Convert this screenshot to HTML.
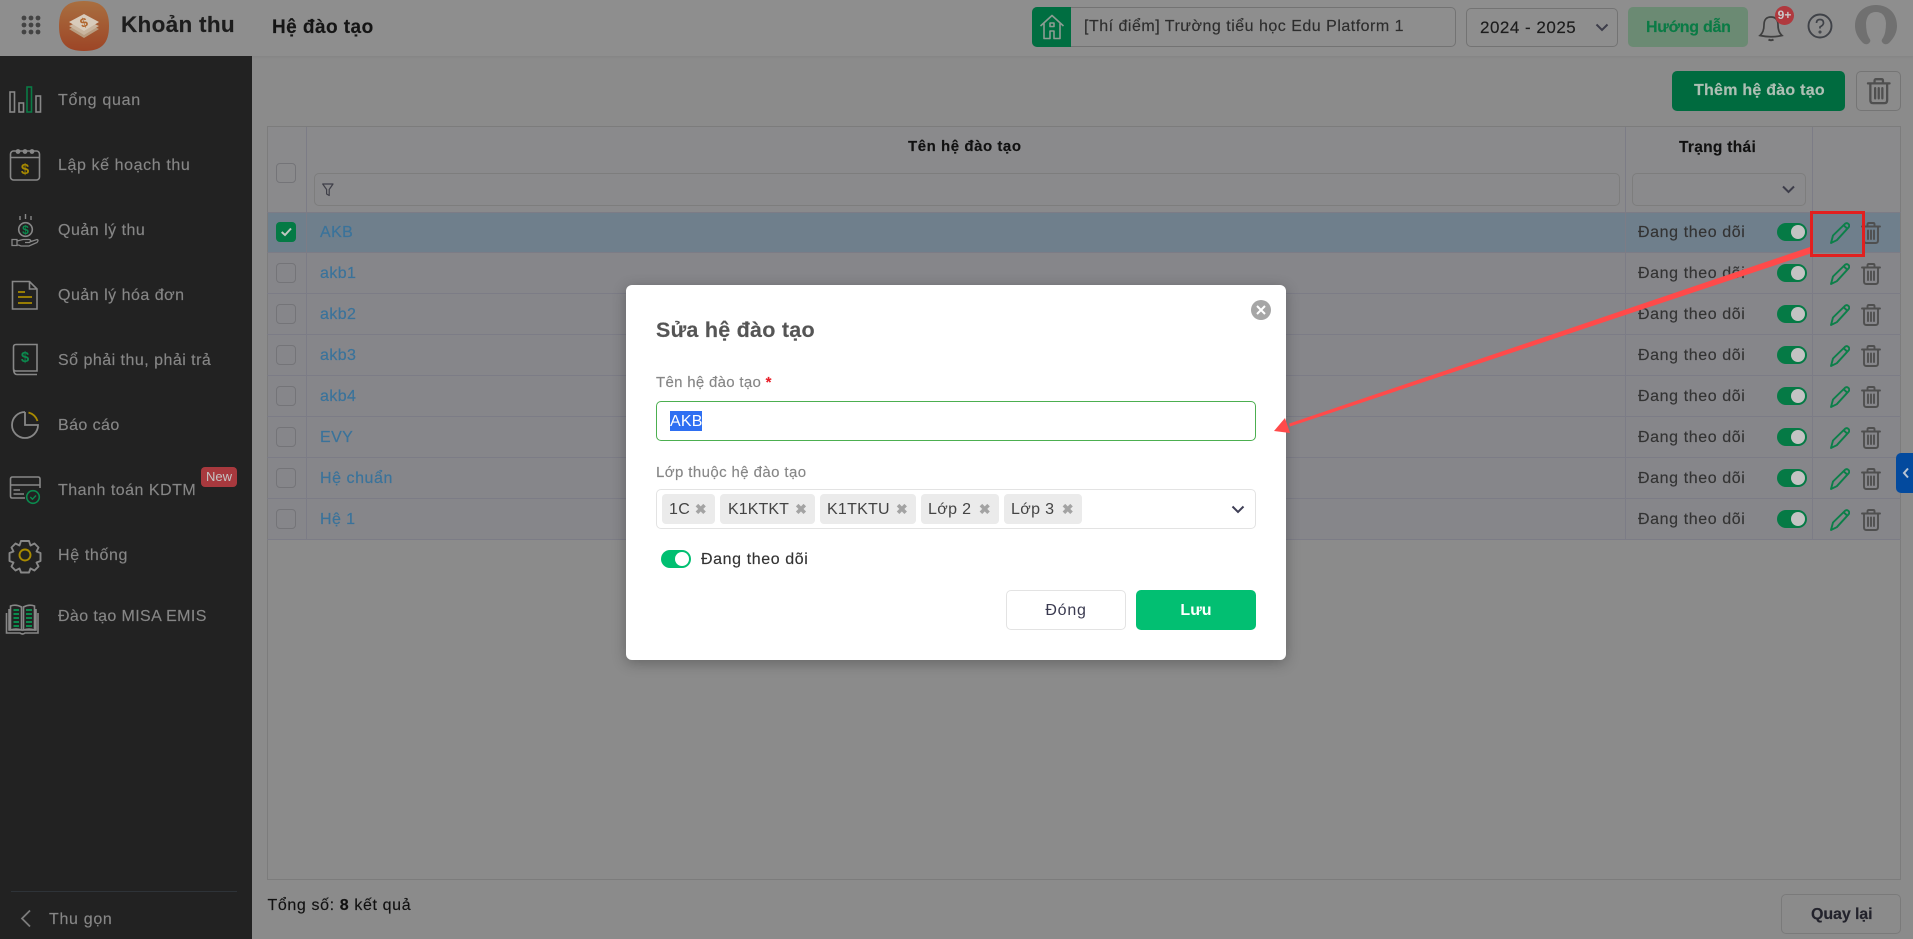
<!DOCTYPE html>
<html lang="vi"><head><meta charset="utf-8"><title>Hệ đào tạo</title>
<style>
*{box-sizing:border-box}
html,body{margin:0;padding:0;width:1913px;height:939px;overflow:hidden;background:#8b8b8b;font-family:"Liberation Sans","Noto Sans CJK SC",sans-serif;font-size:16px;color:#222}
.a{position:absolute}
.t{position:absolute;white-space:nowrap;line-height:20px;letter-spacing:.42px;margin-top:1px;-webkit-text-stroke:.15px}
svg{position:absolute;overflow:visible}
.side{position:absolute;left:0;top:56px;width:252px;height:883px;background:#222}
.nav{position:absolute;left:58px;color:#868686;white-space:nowrap;line-height:20px;letter-spacing:.42px;margin-top:1px;-webkit-text-stroke:.15px}
.cb{position:absolute;left:276px;width:20px;height:20px;border:1px solid #747478;border-radius:4px}
.ln{position:absolute;background:#7c7c86}
.name{position:absolute;left:320px;color:#3a739b;line-height:20px;letter-spacing:.42px;margin-top:1px;-webkit-text-stroke:.2px}
.st{position:absolute;left:1638px;color:#333;line-height:20px;letter-spacing:.6px;margin-top:1px;-webkit-text-stroke:.15px}
.tg{position:absolute;left:1777px;width:30px;height:18px;border-radius:9px;background:#057a45}
.tg:after{content:"";position:absolute;right:2px;top:2px;width:14px;height:14px;border-radius:50%;background:#c3c3c3}
.chip{position:absolute;top:494px;height:30px;background:#ebebeb;border-radius:4px;color:#444;line-height:31px;padding-left:7px;letter-spacing:.35px;white-space:nowrap}
.chip i{position:absolute;right:8px;top:0;font-style:normal;color:#a3a3a3;font-size:14px;font-weight:bold;line-height:30px}
</style></head><body>
<svg width="0" height="0" style="position:absolute">
<symbol id="pen" viewBox="0 0 20 22"><path d="M1 21 L3 13.5 L15 1.8 Q16.8 .4 18.4 1.9 Q20 3.6 18.6 5.3 L6.8 18.2 Z M13.6 3.2 L17.6 7" fill="none" stroke="#0c7f49" stroke-width="1.9" stroke-linejoin="round"/></symbol>
<symbol id="bin" viewBox="0 0 20 22"><path d="M1 4.5H19 M6.5 4V2.2Q6.5 1 7.8 1H12.2Q13.5 1 13.5 2.2V4 M3 5V18.5Q3 21 5.5 21H14.5Q17 21 17 18.5V5 M7 8.5V17 M10 8.5V17 M13 8.5V17" fill="none" stroke="#4f4f4f" stroke-width="1.9" stroke-linecap="round"/></symbol>
</svg>

<!-- top bar -->
<div class="a" style="left:0;top:0;width:1913px;height:56px;background:#8e8e8e;box-shadow:0 1px 2px rgba(0,0,0,.06)"></div>
<svg style="left:21px;top:15px" width="20" height="20" fill="#444"><circle cx="3" cy="3" r="2.4"/><circle cx="10" cy="3" r="2.4"/><circle cx="17" cy="3" r="2.4"/><circle cx="3" cy="10" r="2.4"/><circle cx="10" cy="10" r="2.4"/><circle cx="17" cy="10" r="2.4"/><circle cx="3" cy="17" r="2.4"/><circle cx="10" cy="17" r="2.4"/><circle cx="17" cy="17" r="2.4"/></svg>
<svg style="left:59px;top:1px" width="50" height="50"><defs><linearGradient id="lg" x1="0" y1="0" x2="0" y2="1"><stop offset="0" stop-color="#a96f40"/><stop offset="1" stop-color="#9d4526"/></linearGradient></defs><path d="M25 0C42 0 50 7 50 25C50 43 42 50 25 50C8 50 0 43 0 25C0 7 8 0 25 0Z" fill="url(#lg)"/><path d="M10 28L25 21L40 28L25 37Z" fill="#b89c80"/><path d="M10 25L25 18L40 25L25 34Z" fill="#c9b59f"/><path d="M10 21L25 13L40 21L25 30Z" fill="#d8cbbb"/><text x="25" y="26" text-anchor="middle" font-size="13" font-weight="bold" fill="#b0662e" font-family="Liberation Sans" transform="rotate(-20 25 22)">$</text></svg>
<div class="t" style="left:121px;top:11px;font-size:22.5px;font-weight:bold;color:#1d1d1d;line-height:26px;letter-spacing:.3px">Khoản thu</div>
<div class="t" style="left:272px;top:17px;font-size:19px;font-weight:bold;color:#151515;letter-spacing:.45px">Hệ đào tạo</div>

<div class="a" style="left:1032px;top:7px;width:424px;height:40px;border:1px solid #737373;border-radius:5px"></div>
<div class="a" style="left:1032px;top:7px;width:39px;height:40px;background:#006e41;border-radius:5px 0 0 5px"></div>
<svg style="left:1040px;top:14px" width="24" height="26" fill="none" stroke="#8d9c93" stroke-width="1.6" stroke-linejoin="round"><path d="M0.5 12L12 1.5L23.5 12 M4 9.5V24.5H10V17H14V24.5H20V9.5"/><rect x="10" y="9" width="4" height="3.5"/></svg>
<div class="t" style="left:1084px;top:16px;color:#2d2d2d;letter-spacing:.5px">[Thí điểm] Trường tiểu học Edu Platform 1</div>

<div class="a" style="left:1466px;top:8px;width:152px;height:39px;border:1px solid #737373;border-radius:5px"></div>
<div class="t" style="left:1480px;top:17px;color:#1c1c1c;font-size:17px;letter-spacing:.5px">2024 - 2025</div>
<svg style="left:1595px;top:23px" width="14" height="9" fill="none" stroke="#3d3d4a" stroke-width="2"><path d="M1.5 1.5L7 7L12.5 1.5"/></svg>

<div class="a" style="left:1628px;top:7px;width:120px;height:40px;background:#6b8a73;border-radius:5px"></div>
<div class="t" style="left:1646px;top:17px;color:#0a7b45;font-weight:bold;letter-spacing:-.25px">Hướng dẫn</div>

<svg style="left:1758px;top:14px" width="26" height="28" fill="none" stroke="#3f3f3f" stroke-width="1.7"><path d="M2 21.5Q6 18 6 11Q6 3 13 3Q20 3 20 11Q20 18 24 21.5Q13 24 2 21.5Z"/><path d="M10.5 25.5Q13 27 15.5 25.5" stroke-width="2"/></svg>
<div class="a" style="left:1775px;top:6px;width:19px;height:19px;border-radius:50%;background:#b0393e;color:#c9c9c9;font-size:12px;font-weight:bold;text-align:center;line-height:18px">9+</div>
<svg style="left:1807px;top:13px" width="26" height="26" fill="none" stroke="#3f4248" stroke-width="1.9"><circle cx="13" cy="13" r="11.5"/><path d="M9.5 10Q9.5 6.5 13 6.5Q16.5 6.5 16.5 10Q16.5 12 13 14V15.5" stroke-width="1.7"/><circle cx="13" cy="19" r=".6"/></svg>
<svg style="left:1855px;top:5px" width="42" height="39"><path d="M8 38Q0 30 0 21C0 8 9 0 21 0S42 8 42 21Q42 30 34 38Q30 41 27 37Q26 35 28 33Q31 28 31 18Q30 7 21 7T11 18Q11 28 14 33Q16 35 15 37Q12 41 8 38Z" fill="#707070"/></svg>

<!-- sidebar -->
<div class="side"></div>
<svg style="left:0;top:56px" width="252" height="600" fill="none" stroke="#878787" stroke-width="1.6">
<!-- bars -->
<rect x="10" y="36" width="4.5" height="20"/><rect x="19" y="47" width="4.5" height="9"/><rect x="27" y="31" width="4.5" height="25" stroke="#0a7b45"/><rect x="36" y="40" width="4.5" height="16"/>
<!-- calendar -->
<rect x="10.5" y="95" width="29" height="29" rx="3"/><path d="M10.5 101.5H39.5"/><circle cx="18" cy="95.5" r="1.6" fill="#878787"/><circle cx="25" cy="95.5" r="1.6" fill="#878787"/><circle cx="32" cy="95.5" r="1.6" fill="#878787"/>
<text x="25" y="118" text-anchor="middle" font-size="15" font-weight="bold" fill="#a88a00" stroke="none" font-family="Liberation Sans">$</text>
<!-- hand coin -->
<circle cx="25.5" cy="173.5" r="6.8"/><path d="M20 164V160 M25.5 163V158 M31 164V160" stroke-width="1.4"/>
<text x="25.5" y="178" text-anchor="middle" font-size="12" font-weight="bold" fill="#0b8a4e" stroke="none" font-family="Liberation Sans">$</text>
<path d="M12 183.5H17V189.5H12Z M17 185L23 183.5H29Q32 184 29.5 186.5H25 M29.5 186L37 183.5Q39 184 37 186.5L29 190H21L17 188.5" stroke-width="1.3"/>
<!-- doc -->
<path d="M12.5 225.5H29.5L37 233V253H12.5Z M29.5 225.5V233H37"/><path d="M18 236H25 M18 241H32 M18 247H32" stroke="#a88a00" stroke-width="1.8"/>
<!-- book -->
<path d="M13.5 291Q13.5 288.5 16 288.5H37V315H16Q13.5 315 13.5 312.5Z M13.5 312Q13.5 318.5 17 318.5H37"/>
<text x="25" y="306" text-anchor="middle" font-size="15" font-weight="bold" fill="#0b8a4e" stroke="none" font-family="Liberation Sans">$</text>
<!-- pie -->
<path d="M25 356A13 13 0 1 0 38 369H25V356" stroke-width="1.8"/><path d="M28.5 356.5A13 13 0 0 1 37.5 365" stroke="#a88a00" stroke-width="1.8"/>
<!-- card -->
<path d="M25 442H12Q10.5 442 10.5 440V423Q10.5 421 12.5 421H38Q40 421 40 423V432 M10.5 429H40 M13.5 434H20 M13.5 438H24"/><circle cx="33" cy="441" r="6.3" stroke="#0b8a4e"/><path d="M30.3 441L32.5 443.2L36 439.5" stroke="#0b8a4e" stroke-width="1.4"/>
<!-- gear -->
<path d="M21 485H29L30.5 489.5L34.5 487.5L38.5 491.5L36.5 495.5L40.5 497V505L36.5 506.5L38.5 510.5L34.5 514.5L30.5 512.5L29 516.5H21L19.5 512.5L15.5 514.5L11.5 510.5L13.5 506.5L9.5 505V497L13.5 495.5L11.5 491.5L15.5 487.5L19.5 489.5Z" stroke-linejoin="round" stroke-width="1.9"/><circle cx="25" cy="499" r="5.5" stroke="#a88a00" stroke-width="1.9"/>
<!-- open book -->
<path d="M9 553V574H36V553 M6.5 557V577H20Q22.5 579 25 577H38V557 M10.5 550Q16 548 21.5 551V574Q16 572 10.5 574Z M23.5 551Q29 548 34.5 550V574Q29 572 23.5 574Z"/><path d="M13.5 554H19 M13.5 558H19 M13.5 562H19 M13.5 566H19 M13.5 570H19 M26 554H32 M26 558H32 M26 562H32 M26 566H32 M26 570H32" stroke="#0a8a4c" stroke-width="2"/>
</svg>
<div class="nav" style="top:90px;letter-spacing:.7px">Tổng quan</div>
<div class="nav" style="top:155px;letter-spacing:.6px">Lập kế hoạch thu</div>
<div class="nav" style="top:220px;letter-spacing:.5px">Quản lý thu</div>
<div class="nav" style="top:285px;letter-spacing:.5px">Quản lý hóa đơn</div>
<div class="nav" style="top:350px;letter-spacing:.48px">Sổ phải thu, phải trả</div>
<div class="nav" style="top:415px">Báo cáo</div>
<div class="nav" style="top:480px;letter-spacing:.5px">Thanh toán KDTM</div>
<div class="a" style="left:201px;top:467px;width:36px;height:20px;background:#a8393e;border-radius:4px;color:#c4c4c4;font-size:13px;text-align:center;line-height:19px">New</div>
<div class="nav" style="top:545px;letter-spacing:.64px">Hệ thống</div>
<div class="nav" style="top:606px;letter-spacing:.38px">Đào tạo MISA EMIS</div>
<div class="a" style="left:11px;top:891px;width:226px;height:1px;background:#2e3338"></div>
<svg style="left:20px;top:909px" width="12" height="20" fill="none" stroke="#7c7c7c" stroke-width="1.8"><path d="M10 1.5L2 9.5L10 17.5"/></svg>
<div class="nav" style="left:49px;top:909px;letter-spacing:.68px">Thu gọn</div>

<!-- toolbar -->
<div class="a" style="left:1672px;top:71px;width:173px;height:40px;background:#006b3f;border-radius:5px"></div>
<div class="t" style="left:1694px;top:80px;color:#aebfb4;font-weight:bold;letter-spacing:.25px">Thêm hệ đào tạo</div>
<div class="a" style="left:1856px;top:71px;width:45px;height:40px;border:1px solid #757575;border-radius:5px"></div>
<svg style="left:1866px;top:78px" width="25.5" height="26.4"><use href="#bin" width="25.5" height="26.4"/></svg>

<!-- table -->
<div class="a" style="left:267px;top:126px;width:1634px;height:754px;border:1px solid #7c7c7c"></div>
<div class="a" style="left:268px;top:212px;width:1632px;height:328px;background:#86868a"></div>
<div class="a" style="left:268px;top:212px;width:1632px;height:40px;background:#6f7f8c"></div>
<div class="a" style="left:268px;top:127px;width:1632px;height:85px;background:#8a8a8c"></div>
<div class="ln" style="left:267px;top:212px;width:1634px;height:1px"></div>
<div class="ln" style="left:267px;top:252px;width:1634px;height:1px"></div>
<div class="ln" style="left:267px;top:293px;width:1634px;height:1px"></div>
<div class="ln" style="left:267px;top:334px;width:1634px;height:1px"></div>
<div class="ln" style="left:267px;top:375px;width:1634px;height:1px"></div>
<div class="ln" style="left:267px;top:416px;width:1634px;height:1px"></div>
<div class="ln" style="left:267px;top:457px;width:1634px;height:1px"></div>
<div class="ln" style="left:267px;top:498px;width:1634px;height:1px"></div>
<div class="ln" style="left:267px;top:539px;width:1634px;height:1px"></div>
<div class="ln" style="left:306px;top:127px;width:1px;height:413px"></div>
<div class="ln" style="left:1625px;top:127px;width:1px;height:413px"></div>
<div class="ln" style="left:1812px;top:127px;width:1px;height:413px"></div>

<div class="t" style="left:908px;top:136px;font-size:15px;font-weight:bold;color:#111;letter-spacing:.55px">Tên hệ đào tạo</div>
<div class="t" style="left:1679px;top:137px;font-size:15.5px;font-weight:bold;color:#111;letter-spacing:.3px">Trạng thái</div>

<div class="cb" style="top:163px"></div>
<div class="a" style="left:314px;top:173px;width:1306px;height:33px;border:1px solid #7d7d7d;border-radius:5px"></div>
<svg style="left:322px;top:183px" width="12" height="14" fill="none" stroke="#3f3f48" stroke-width="1.2"><path d="M.7 1H11L7.2 6.5V12.5L4.6 11V6.5Z" stroke-linejoin="round"/></svg>
<div class="a" style="left:1632px;top:173px;width:174px;height:33px;border:1px solid #7d7d7d;border-radius:5px"></div>
<svg style="left:1782px;top:185px" width="13" height="9" fill="none" stroke="#3d3d4a" stroke-width="2"><path d="M1 1.5L6.5 7L12 1.5"/></svg>

<!-- rows -->
<div class="a" style="left:276px;top:222px;width:20px;height:20px;background:#047a45;border-radius:4px"></div>
<svg style="left:281px;top:227px" width="11" height="10" fill="none" stroke="#c0c8c2" stroke-width="2"><path d="M.7 5L4 8L10 1.5"/></svg>
<div class="cb" style="top:263px"></div><div class="cb" style="top:304px"></div><div class="cb" style="top:345px"></div><div class="cb" style="top:386px"></div><div class="cb" style="top:427px"></div><div class="cb" style="top:468px"></div><div class="cb" style="top:509px"></div>

<div class="name" style="top:222px">AKB</div>
<div class="name" style="top:263px">akb1</div>
<div class="name" style="top:304px">akb2</div>
<div class="name" style="top:345px">akb3</div>
<div class="name" style="top:386px">akb4</div>
<div class="name" style="top:427px">EVY</div>
<div class="name" style="top:468px;letter-spacing:.55px">Hệ chuẩn</div>
<div class="name" style="top:509px">Hệ 1</div>

<div class="st" style="top:222px">Đang theo dõi</div><div class="tg" style="top:223px"></div>
<div class="st" style="top:263px">Đang theo dõi</div><div class="tg" style="top:264px"></div>
<div class="st" style="top:304px">Đang theo dõi</div><div class="tg" style="top:305px"></div>
<div class="st" style="top:345px">Đang theo dõi</div><div class="tg" style="top:346px"></div>
<div class="st" style="top:386px">Đang theo dõi</div><div class="tg" style="top:387px"></div>
<div class="st" style="top:427px">Đang theo dõi</div><div class="tg" style="top:428px"></div>
<div class="st" style="top:468px">Đang theo dõi</div><div class="tg" style="top:469px"></div>
<div class="st" style="top:509px">Đang theo dõi</div><div class="tg" style="top:510px"></div>

<svg style="left:1830px;top:222px" width="20" height="22"><use href="#pen"/></svg><svg style="left:1861px;top:222px" width="20" height="22"><use href="#bin"/></svg>
<svg style="left:1830px;top:263px" width="20" height="22"><use href="#pen"/></svg><svg style="left:1861px;top:263px" width="20" height="22"><use href="#bin"/></svg>
<svg style="left:1830px;top:304px" width="20" height="22"><use href="#pen"/></svg><svg style="left:1861px;top:304px" width="20" height="22"><use href="#bin"/></svg>
<svg style="left:1830px;top:345px" width="20" height="22"><use href="#pen"/></svg><svg style="left:1861px;top:345px" width="20" height="22"><use href="#bin"/></svg>
<svg style="left:1830px;top:386px" width="20" height="22"><use href="#pen"/></svg><svg style="left:1861px;top:386px" width="20" height="22"><use href="#bin"/></svg>
<svg style="left:1830px;top:427px" width="20" height="22"><use href="#pen"/></svg><svg style="left:1861px;top:427px" width="20" height="22"><use href="#bin"/></svg>
<svg style="left:1830px;top:468px" width="20" height="22"><use href="#pen"/></svg><svg style="left:1861px;top:468px" width="20" height="22"><use href="#bin"/></svg>
<svg style="left:1830px;top:509px" width="20" height="22"><use href="#pen"/></svg><svg style="left:1861px;top:509px" width="20" height="22"><use href="#bin"/></svg>

<!-- footer -->
<div class="t" style="left:267.5px;top:895px;color:#111;letter-spacing:.62px">Tổng số: <b>8</b> kết quả</div>
<div class="a" style="left:1781px;top:894px;width:120px;height:40px;border:1px solid #7a7a7a;border-radius:5px"></div>
<div class="t" style="left:1811px;top:904px;font-weight:bold;color:#23232c;letter-spacing:-.1px">Quay lại</div>

<!-- side tab -->
<div class="a" style="left:1896px;top:453px;width:17px;height:40px;background:#034a9e;border-radius:5px 0 0 5px"></div>
<svg style="left:1902px;top:467px" width="8" height="12" fill="none" stroke="#b9c4d3" stroke-width="2"><path d="M6 1.5L2 6L6 10.5"/></svg>

<!-- modal -->
<div class="a" style="left:626px;top:285px;width:660px;height:375px;background:#fff;border-radius:6px;box-shadow:0 3px 14px rgba(0,0,0,.28)"></div>
<div class="t" style="left:656px;top:317px;font-size:21.5px;font-weight:bold;color:#555;line-height:24px;letter-spacing:.25px">Sửa hệ đào tạo</div>
<svg style="left:1251px;top:300px" width="20" height="20"><circle cx="10" cy="10" r="10" fill="#a6a6a6"/><path d="M6 6L14 14M14 6L6 14" stroke="#fff" stroke-width="2"/></svg>
<div class="t" style="left:656px;top:372px;font-size:15px;color:#868686;letter-spacing:.3px">Tên hệ đào tạo <span style="color:#e8202a;font-weight:bold">*</span></div>
<div class="a" style="left:656px;top:401px;width:600px;height:40px;border:1px solid #4caf50;border-radius:5px"></div>
<div class="a" style="left:670px;top:411px;width:32px;height:20px;background:#2e6ff2;color:#fff;line-height:22px;letter-spacing:.2px">AKB</div>
<div class="t" style="left:656px;top:462px;font-size:15px;color:#868686;letter-spacing:.4px">Lớp thuộc hệ đào tạo</div>
<div class="a" style="left:656px;top:489px;width:600px;height:40px;border:1px solid #e3e3e3;border-radius:5px"></div>
<div class="chip" style="left:662px;width:53px">1C<i>✖</i></div>
<div class="chip" style="left:720px;width:95px;padding-left:8px;letter-spacing:.1px">K1KTKT<i>✖</i></div>
<div class="chip" style="left:820px;width:96px;letter-spacing:.25px">K1TKTU<i>✖</i></div>
<div class="chip" style="left:921px;width:78px">Lớp 2<i>✖</i></div>
<div class="chip" style="left:1004px;width:78px">Lớp 3<i>✖</i></div>
<svg style="left:1231px;top:505px" width="14" height="9" fill="none" stroke="#3e3e55" stroke-width="2"><path d="M1.5 1.5L7 7L12.5 1.5"/></svg>
<div class="a" style="left:661px;top:550px;width:30px;height:18px;border-radius:9px;background:#00bf71"></div>
<div class="a" style="left:675px;top:552px;width:14px;height:14px;border-radius:50%;background:#fff"></div>
<div class="t" style="left:701px;top:549px;color:#333;letter-spacing:.6px">Đang theo dõi</div>
<div class="a" style="left:1006px;top:590px;width:120px;height:40px;border:1px solid #e3e3e3;border-radius:5px;background:#fff;text-align:center;line-height:40px;color:#3a3a50;letter-spacing:.75px">Đóng</div>
<div class="a" style="left:1136px;top:590px;width:120px;height:40px;border-radius:5px;background:#02bf72;text-align:center;line-height:42px;color:#fff;font-weight:bold">Lưu</div>

<!-- annotation -->
<svg style="left:0;top:0" width="1913" height="939">
<path d="M1812 253L1810 247L1289 423.6L1290 426.5Z" fill="#ff4a4a"/>
<path d="M1274 431L1285 418L1290 433Z" fill="#ff4a4a"/>
<rect x="1811.5" y="212.5" width="52" height="43" fill="none" stroke="#e1201f" stroke-width="3"/>
</svg>
</body></html>
